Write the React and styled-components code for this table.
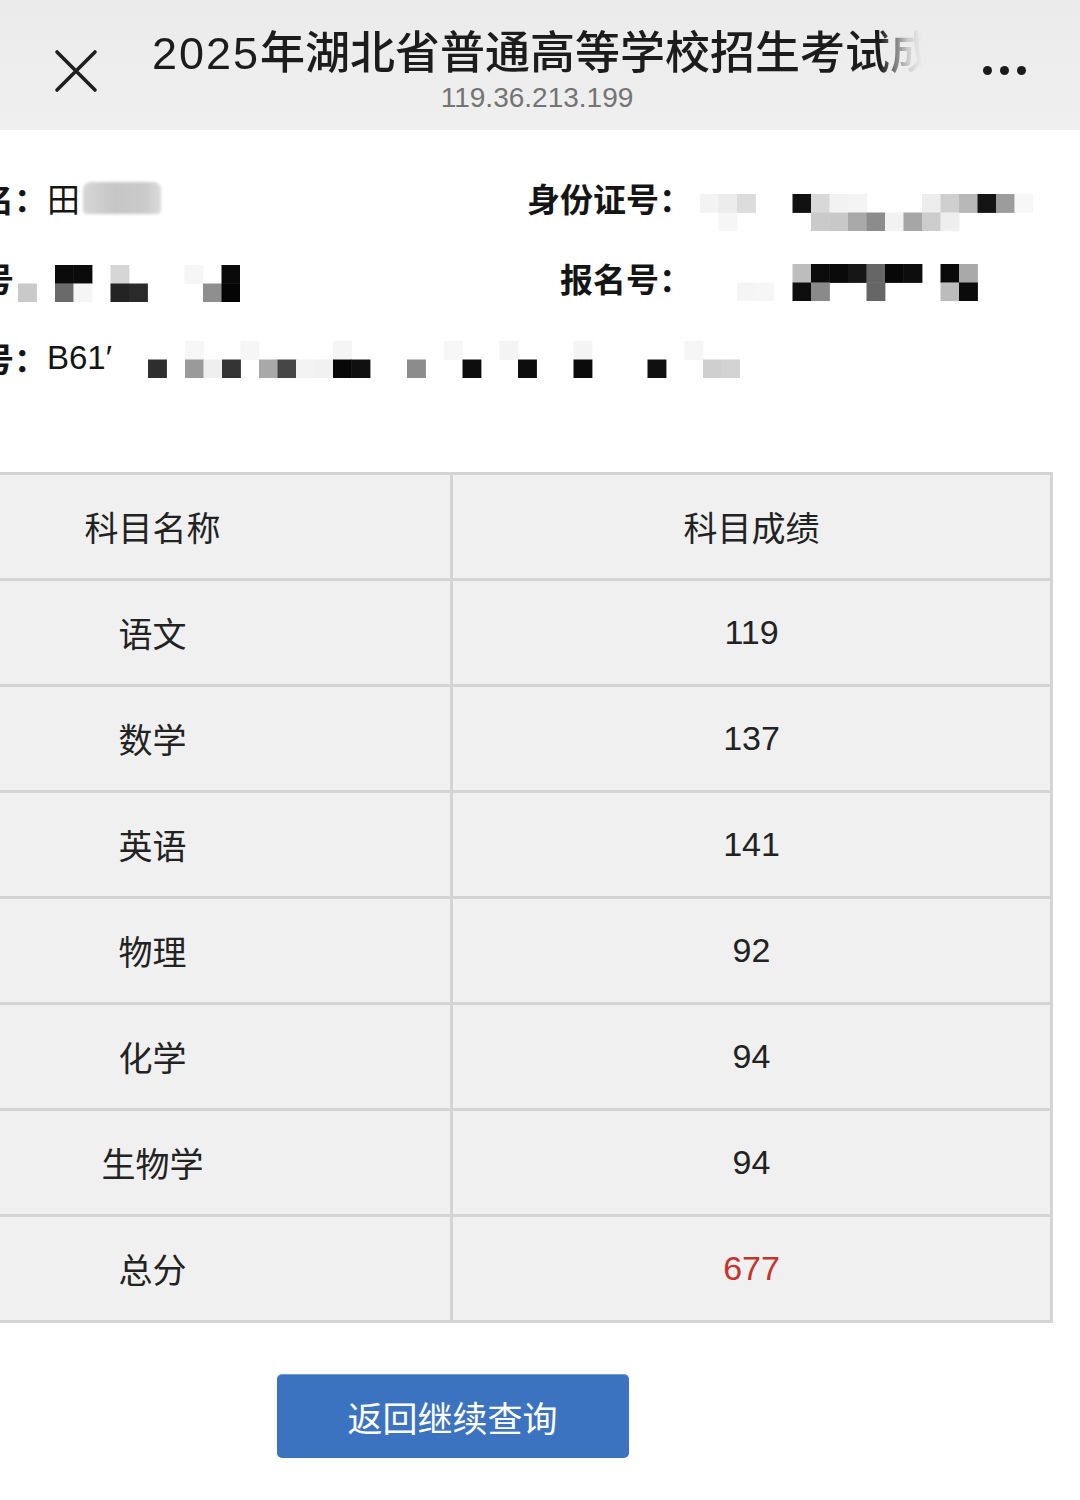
import React from "react";
import styled, { createGlobalStyle } from "styled-components";

const Global = createGlobalStyle`
  html, body { margin: 0; padding: 0; background: #ffffff; }
  body {
    font-family: "Liberation Sans", "Noto Sans CJK SC", sans-serif;
    color: #1a1a1a;
    overflow-x: hidden;
  }
`;

const Screen = styled.div`
  width: 1080px;
  min-height: 1500px;
  background: #ffffff;
  overflow: hidden;
`;

/* ---------- header ---------- */
const Header = styled.header`
  height: 130px;
  background: linear-gradient(180deg, #ebebeb 0%, #efefef 100%);
  display: grid;
  grid-template-columns: 152px 770px 1fr;
  align-items: start;
`;

const IconCell = styled.div`
  height: 130px;
  display: flex;
  align-items: center;
  justify-content: ${(p) => p.$justify || "center"};
  padding-top: ${(p) => p.$pt || 12}px;
  box-sizing: border-box;
`;

const TitleBlock = styled.div`
  display: flex;
  flex-direction: column;
  align-items: center;
  padding-top: 24px;
`;

const Title = styled.div`
  width: 100%;
  font-size: 45px;
  line-height: 60px;
  font-weight: 500;
  color: #1c1c1c;
  white-space: nowrap;
  overflow: hidden;
  -webkit-mask-image: linear-gradient(to right, #000 calc(100% - 42px), rgba(0,0,0,0.15) calc(100% - 14px), transparent 100%);
  mask-image: linear-gradient(to right, #000 calc(100% - 42px), rgba(0,0,0,0.15) calc(100% - 14px), transparent 100%);
`;

const Year = styled.span`
  letter-spacing: 2px;
`;

const SubTitle = styled.div`
  font-size: 28px;
  line-height: 28px;
  color: #747474;
`;

const Dots = styled.div`
  display: flex;
  gap: 8px;
  margin-left: 61px;
`;

const Dot = styled.span`
  width: 9px;
  height: 9px;
  border-radius: 50%;
  background: #1a1a1a;
`;

/* ---------- content ---------- */
const Content = styled.main`
  width: 1201px;
  margin-left: -148px;
  display: flex;
  flex-direction: column;
`;

const Info = styled.section`
  padding-top: 28px;
  display: flex;
  flex-direction: column;
`;

const InfoRow = styled.div`
  height: 80px;
  display: grid;
  grid-template-columns: 195px 439px 206px 1fr;
  align-items: center;
  font-size: 33px;
`;

const Label = styled.div`
  text-align: right;
  font-weight: 700;
  color: #151515;
  white-space: nowrap;
  padding-right: ${(p) => p.$pr || 0}px;
`;

const Value = styled.div`
  display: flex;
  align-items: center;
  white-space: nowrap;
  color: #151515;
  grid-column: ${(p) => p.$span || "auto"};
  gap: ${(p) => p.$gap || 0}px;
`;

const Blur = styled.span`
  display: inline-block;
  width: 78px;
  height: 32px;
  margin-left: 3px;
  border-radius: 8px 8px 4px 4px;
  background: linear-gradient(90deg, #d6d6d6 0%, #c6c6c6 40%, #cacaca 80%, #dadada 100%);
  filter: blur(1.5px);
`;

const Svg = styled.svg`
  display: block;
  flex: none;
  margin-left: ${(p) => p.$ml || 0}px;
  transform: translateY(${(p) => p.$dy || 0}px);
`;

function Mosaic({ cells, size = 18.5, rows = 2, ml, dy }) {
  const cols = Math.max(...cells.map((c) => c[0])) + 1;
  return (
    <Svg
      width={cols * size}
      height={rows * size}
      viewBox={`0 0 ${cols * size} ${rows * size}`}
      $ml={ml}
      $dy={dy}
    >
      {cells.map(([c, r, color], i) => (
        <rect key={i} x={c * size} y={r * size} width={size + 0.4} height={size + 0.4} fill={color} />
      ))}
    </Svg>
  );
}

const row1Right = [
  [0, 0, "#f3f3f3"], [1, 0, "#ececec"], [2, 0, "#dcdcdc"], [5, 0, "#111"], [6, 0, "#d8d8d8"],
  [7, 0, "#f2f2f2"], [8, 0, "#f4f4f4"], [12, 0, "#ededed"], [13, 0, "#cfcfcf"], [14, 0, "#b8b8b8"],
  [15, 0, "#141414"], [16, 0, "#9c9c9c"], [17, 0, "#f7f7f7"],
  [1, 1, "#f6f6f6"], [6, 1, "#cacaca"], [7, 1, "#c8c8c8"], [8, 1, "#a8a8a8"], [9, 1, "#8c8c8c"],
  [10, 1, "#f2f2f2"], [11, 1, "#a6a6a6"], [12, 1, "#cccccc"], [13, 1, "#eeeeee"],
];

const row2Right = [
  [5, 0, "#bdbdbd"], [6, 0, "#0c0c0c"], [7, 0, "#0a0a0a"], [8, 0, "#161616"], [9, 0, "#666"],
  [10, 0, "#080808"], [11, 0, "#0d0d0d"], [13, 0, "#0a0a0a"], [14, 0, "#a9a9a9"],
  [2, 1, "#f5f5f5"], [3, 1, "#f6f6f6"], [5, 1, "#0e0e0e"], [6, 1, "#8a8a8a"], [9, 1, "#666"],
  [13, 1, "#bcbcbc"], [14, 1, "#0b0b0b"],
];

const row2Left = [
  [2, 0, "#0b0b0b"], [3, 0, "#0b0b0b"], [5, 0, "#d6d6d6"], [9, 0, "#f6f6f6"], [11, 0, "#0a0a0a"],
  [0, 1, "#c9c9c9"], [2, 1, "#6a6a6a"], [3, 1, "#f5f5f5"], [5, 1, "#232323"], [6, 1, "#2a2a2a"],
  [10, 1, "#8f8f8f"], [11, 1, "#050505"],
];

const row3 = [
  [2, 0, "#f7f7f7"], [5, 0, "#f6f6f6"], [10, 0, "#f5f5f5"], [16, 0, "#f7f7f7"], [19, 0, "#f4f4f4"],
  [23, 0, "#f4f4f4"], [29, 0, "#f6f6f6"],
  [0, 1, "#2e2e2e"], [2, 1, "#9a9a9a"], [3, 1, "#efefef"], [4, 1, "#333"], [6, 1, "#a9a9a9"],
  [7, 1, "#454545"], [8, 1, "#f3f3f3"], [9, 1, "#f1f1f1"], [10, 1, "#080808"], [11, 1, "#101010"],
  [14, 1, "#8c8c8c"], [17, 1, "#0d0d0d"], [20, 1, "#0d0d0d"], [23, 1, "#0b0b0b"], [27, 1, "#101010"],
  [30, 1, "#cfcfcf"], [31, 1, "#d3d3d3"],
];

/* ---------- table ---------- */
const Table = styled.div`
  margin-top: 74px;
  display: grid;
  grid-template-columns: 595px 597px;
  grid-auto-rows: 103px;
  gap: 3px;
  padding: 3px;
  background: #d4d4d4;
`;

const Cell = styled.div`
  background: #f0f0f0;
  display: flex;
  align-items: center;
  justify-content: center;
  font-size: 34px;
  color: ${(p) => (p.$red ? "#c4342c" : "#222222")};
`;

const Button = styled.button`
  align-self: center;
  margin-top: 51px;
  width: 352px;
  height: 84px;
  border: none;
  border-top: 1px solid #6f9ad6;
  border-radius: 5px;
  background: #3c73c1;
  color: #ffffff;
  font-family: "Noto Sans CJK SC", sans-serif;
  font-size: 35px;
  cursor: pointer;
`;

const subjects = [
  ["语文", "119"],
  ["数学", "137"],
  ["英语", "141"],
  ["物理", "92"],
  ["化学", "94"],
  ["生物学", "94"],
];

export default function App() {
  return (
    <Screen>
      <Global />
      <Header>
        <IconCell>
          <svg width="46" height="46" viewBox="0 0 46 46">
            <path d="M4 4 L42 42 M42 4 L4 42" stroke="#1f1f1f" strokeWidth="3.6" strokeLinecap="round" fill="none" />
          </svg>
        </IconCell>
        <TitleBlock>
          <Title>
            <Year>2025</Year>年湖北省普通高等学校招生考试成绩查询
          </Title>
          <SubTitle>119.36.213.199</SubTitle>
        </TitleBlock>
        <IconCell $justify="flex-start" $pt={10}>
          <Dots>
            <Dot />
            <Dot />
            <Dot />
          </Dots>
        </IconCell>
      </Header>

      <Content>
        <Info>
          <InfoRow>
            <Label>姓名：</Label>
            <Value>
              田<Blur />
            </Value>
            <Label>身份证号：</Label>
            <Value>
              <Mosaic cells={row1Right} ml={8} dy={14} />
            </Value>
          </InfoRow>
          <InfoRow>
            <Label $pr={33}>考生号</Label>
            <Value>
              <Mosaic cells={row2Left} ml={-29} dy={5} />
            </Value>
            <Label>报名号：</Label>
            <Value>
              <Mosaic cells={row2Right} ml={8} dy={4} />
            </Value>
          </InfoRow>
          <InfoRow>
            <Label>准考证号：</Label>
            <Value $span="2 / -1" $gap={36}>
              B61′
              <Mosaic cells={row3} dy={1} />
            </Value>
          </InfoRow>
        </Info>

        <Table>
          <Cell>科目名称</Cell>
          <Cell>科目成绩</Cell>
          {subjects.map(([name, score]) => (
            <React.Fragment key={name}>
              <Cell>{name}</Cell>
              <Cell>{score}</Cell>
            </React.Fragment>
          ))}
          <Cell>总分</Cell>
          <Cell $red>677</Cell>
        </Table>

        <Button>返回继续查询</Button>
      </Content>
    </Screen>
  );
}
